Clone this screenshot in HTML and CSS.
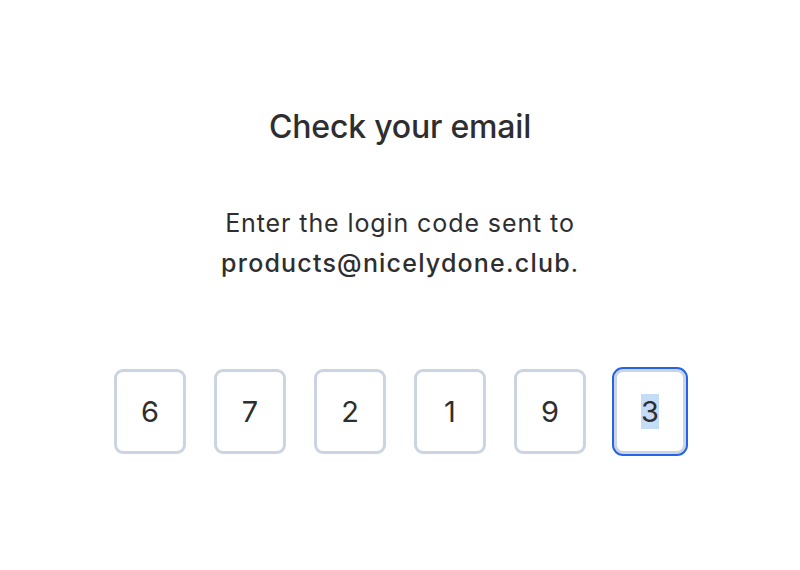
FILE: index.html
```html
<!DOCTYPE html>
<html lang="en">
<head>
<meta charset="utf-8">
<title>Check your email</title>
<link rel="stylesheet" href="styles.css">
</head>
<body>
<main class="page">
  <h1 class="title">Check your email</h1>
  <p class="lead">Enter the login code sent to<br><span class="email">products@nicelydone.club</span>.</p>
  <div class="code">
    <div class="cell"><span class="digit">6</span></div>
    <div class="cell"><span class="digit">7</span></div>
    <div class="cell"><span class="digit">2</span></div>
    <div class="cell"><span class="digit">1</span></div>
    <div class="cell"><span class="digit">9</span></div>
    <div class="cell cell-focus"><span class="digit digit-selected">3</span></div>
  </div>
</main>
</body>
</html>
```
FILE: styles.css
```css
html, body {
  margin: 0;
  padding: 0;
  background: #ffffff;
}
body {
  font-family: Inter, "Noto Sans", "Liberation Sans", sans-serif;
  color: #2e2e30;
}
.page {
  width: 800px;
  height: 570px;
  display: flex;
  flex-direction: column;
  align-items: center;
  padding-top: 105px;
  box-sizing: border-box;
}
.title {
  margin: 0;
  font-size: 32px;
  line-height: 44px;
  font-weight: 500;
  letter-spacing: -0.2px;
}
.lead {
  margin: 54px 0 0;
  font-size: 25px;
  line-height: 40px;
  font-weight: 400;
  text-align: center;
  letter-spacing: 0.9px;
}
.email {
  font-weight: 500;
  letter-spacing: 1.2px;
}
.code {
  margin-top: 86px;
  display: flex;
  gap: 28px;
}
.cell {
  width: 72px;
  height: 85px;
  box-sizing: border-box;
  border: 3px solid #cbd5e1;
  border-radius: 9px;
  display: flex;
  align-items: center;
  justify-content: center;
}
.cell-focus {
  outline: 2px solid #2563eb;
  outline-offset: 0;
}
.digit {
  font-size: 29px;
  line-height: 35px;
  font-weight: 400;
  color: #2e2e30;
}
.digit-selected {
  background: #c5dcf7;
}
```
